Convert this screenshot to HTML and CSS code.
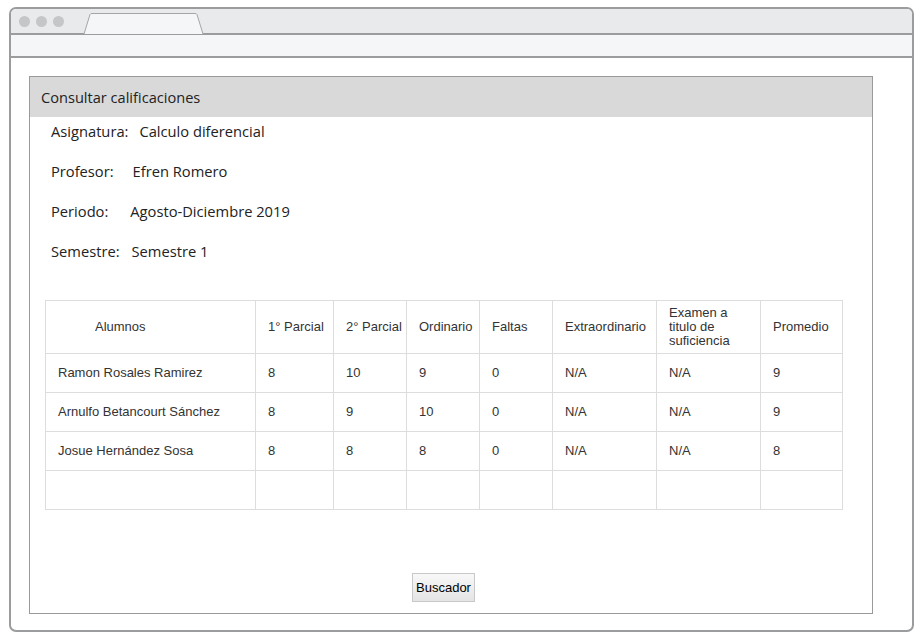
FILE: index.html
```html
<!DOCTYPE html>
<html lang="es">
<head>
<meta charset="utf-8">
<title>Consultar calificaciones</title>
<link rel="stylesheet" href="styles.css">
</head>
<body>
<div class="frame">
  <div class="tabbar">
    <div class="dots"><span class="dot"></span><span class="dot"></span><span class="dot"></span></div>
    <svg class="tab" width="122" height="21" viewBox="0 0 122 21">
      <path d="M1 21 L7 1.5 Q7.5 0.5 9 0.5 L112 0.5 Q113.5 0.5 114 1.5 L120 21" fill="#f5f6f8" stroke="#a3a5a7" stroke-width="1"/>
    </svg>
  </div>
  <div class="addressbar"></div>
  <div class="content">
    <div class="panel">
      <div class="panel-head">Consultar calificaciones</div>
      <div class="info">
        <div class="info-row"><span class="lbl">Asignatura:</span><span class="val v1">Calculo diferencial</span></div>
        <div class="info-row"><span class="lbl">Profesor:</span><span class="val v2">Efren Romero</span></div>
        <div class="info-row"><span class="lbl">Periodo:</span><span class="val v3">Agosto-Diciembre 2019</span></div>
        <div class="info-row"><span class="lbl">Semestre:</span><span class="val v4">Semestre 1</span></div>
      </div>
      <table class="grades">
        <colgroup>
          <col class="c-name"><col class="c-p1"><col class="c-p2"><col class="c-ord"><col class="c-fal"><col class="c-ext"><col class="c-exa"><col class="c-pro">
        </colgroup>
        <thead>
          <tr>
            <th class="th-name">Alumnos</th>
            <th>1° Parcial</th>
            <th>2° Parcial</th>
            <th>Ordinario</th>
            <th>Faltas</th>
            <th>Extraordinario</th>
            <th class="th-exa">Examen a titulo de suficiencia</th>
            <th>Promedio</th>
          </tr>
        </thead>
        <tbody>
          <tr><td>Ramon Rosales Ramirez</td><td>8</td><td>10</td><td>9</td><td>0</td><td>N/A</td><td>N/A</td><td>9</td></tr>
          <tr><td>Arnulfo Betancourt Sánchez</td><td>8</td><td>9</td><td>10</td><td>0</td><td>N/A</td><td>N/A</td><td>9</td></tr>
          <tr><td>Josue Hernández Sosa</td><td>8</td><td>8</td><td>8</td><td>0</td><td>N/A</td><td>N/A</td><td>8</td></tr>
          <tr><td></td><td></td><td></td><td></td><td></td><td></td><td></td><td></td></tr>
        </tbody>
      </table>
      <div class="actions"><button class="btn" type="button">Buscador</button></div>
    </div>
  </div>
</div>
</body>
</html>
```

FILE: styles.css
```css
html, body {
  margin: 0;
  padding: 0;
  background: #ffffff;
}

.frame {
  box-sizing: border-box;
  margin: 7px 10px 0 9px;
  width: 905px;
  height: 625px;
  border: 2px solid #9a9c9e;
  border-radius: 7px;
  overflow: hidden;
  display: flex;
  flex-direction: column;
  background: #fff;
}

.tabbar {
  height: 24px;
  background: #e9eaec;
  border-bottom: 2px solid #9a9c9e;
  display: flex;
  align-items: flex-end;
  gap: 19px;
  padding-left: 8px;
}

.dots {
  display: flex;
  gap: 6px;
  align-self: flex-start;
  margin-top: 7px;
}

.dot {
  width: 11px;
  height: 11px;
  border-radius: 50%;
  background: #c5c6c8;
}

.tab {
  display: block;
  margin-bottom: -1px;
}

.addressbar {
  height: 21px;
  background: #f5f6f8;
  border-bottom: 2px solid #9a9c9e;
}

.content {
  flex: 1;
  padding: 18px 39px 16px 18px;
  display: flex;
}

.panel {
  flex: 1;
  border: 1px solid #9a9a9a;
  display: flex;
  flex-direction: column;
}

.panel-head {
  height: 40px;
  line-height: 40px;
  background: #d9d9d9;
  padding-left: 11px;
  font-family: "Open Sans", sans-serif;
  font-size: 14.6px;
  color: #222;
}

.info {
  padding: 4px 0 0 21px;
  display: flex;
  flex-direction: column;
  gap: 20px;
  font-family: "Open Sans", sans-serif;
  font-size: 14.7px;
  color: #222;
}

.info-row {
  line-height: 20px;
  height: 20px;
  display: flex;
}

.v1 { margin-left: 11px; }
.v2 { margin-left: 19px; }
.v3 { margin-left: 22px; }
.v4 { margin-left: 12px; }

.grades {
  margin: 39px 0 0 15px;
  width: 797px;
  border-collapse: collapse;
  table-layout: fixed;
  font-family: "Liberation Sans", Arial, sans-serif;
  font-size: 13px;
  color: #333;
}

.c-name { width: 210px; }
.c-p1 { width: 78px; }
.c-p2 { width: 73px; }
.c-ord { width: 73px; }
.c-fal { width: 73px; }
.c-ext { width: 104px; }
.c-exa { width: 104px; }
.c-pro { width: 82px; }

.grades th,
.grades td {
  border: 1px solid #dddddd;
  padding: 0 0 0 12px;
  text-align: left;
  vertical-align: middle;
  font-weight: normal;
}

.grades thead th {
  height: 52px;
  line-height: 14px;
  padding-right: 2px;
  white-space: nowrap;
}

.grades thead th.th-exa {
  white-space: normal;
  padding-right: 22px;
}

.grades thead th.th-name {
  padding-left: 49px;
}

.grades tbody td {
  height: 37px;
  line-height: 14px;
  padding-bottom: 1px;
}

.actions {
  margin-top: auto;
  padding: 0 0 11px 382px;
  display: flex;
}

.btn {
  width: 63px;
  height: 29px;
  padding: 0;
  border: 1px solid #c8c8c8;
  background: linear-gradient(#f8f8f8, #e4e4e4);
  font-family: "Liberation Sans", Arial, sans-serif;
  font-size: 13px;
  color: #000;
  cursor: pointer;
}
```
